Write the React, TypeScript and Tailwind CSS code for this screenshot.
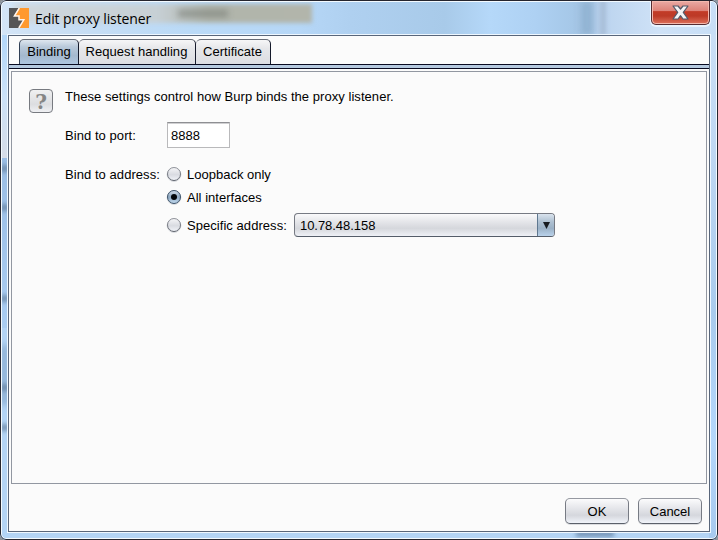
import React from "react";

const ui = "font-['Liberation_Sans',Arial,sans-serif] text-[13px] leading-[16px] text-black whitespace-nowrap";

function Radio({ checked = false }: { checked?: boolean }) {
  return (
    <svg width="16" height="16" viewBox="0 0 16 16" className="shrink-0">
      <defs>
        <linearGradient id="radioOff" x1="0" y1="0" x2="0" y2="1">
          <stop offset="0" stopColor="#f6f6f8" />
          <stop offset=".55" stopColor="#d9dbe1" />
          <stop offset="1" stopColor="#f2f4f9" />
        </linearGradient>
        <linearGradient id="radioOn" x1="0" y1="0" x2="0" y2="1">
          <stop offset="0" stopColor="#d3deea" />
          <stop offset=".5" stopColor="#8fa9c2" />
          <stop offset="1" stopColor="#c4dcf2" />
        </linearGradient>
        <linearGradient id="radioRim" x1="0" y1="0" x2="0" y2="1">
          <stop offset="0" stopColor="#92959c" />
          <stop offset="1" stopColor="#5d626c" />
        </linearGradient>
      </defs>
      <circle cx="8" cy="8.6" r="6.9" fill="none" stroke="#d8dade" />
      <circle cx="8" cy="8" r="6.5" fill={checked ? "url(#radioOn)" : "url(#radioOff)"} stroke={checked ? "#3c5269" : "url(#radioRim)"} />
      {checked && <circle cx="8" cy="8" r="3" fill="#020609" />}
    </svg>
  );
}

function Tab({ label, width, active = false }: { label: string; width: string; active?: boolean }) {
  const tone = active
    ? "bg-[linear-gradient(#dfe7ef_0%,#b9c9da_28%,#a4b9cf_65%,#afc6df_100%)] border-l-[#303f55]"
    : "bg-[linear-gradient(#f6f6f7_0%,#e6e7ea_35%,#dcdde2_100%)] border-l-0 pr-px";
  return (
    <div className={`${width} ${tone} ${ui} h-[25px] border border-b-0 border-t-[#666b76] border-r-[#151a2b] rounded-t-[5px] pt-[4px] text-center tracking-[0.04px]`}>
      {label}
    </div>
  );
}

function Button({ label }: { label: string }) {
  return (
    <button className={`${ui} h-[26px] w-[64px] rounded-[5px] border border-[#777b84] border-t-[#9699a1] border-b-[#5b606a] bg-[linear-gradient(#fbfbfc_0%,#e7e8ec_35%,#d5d7dd_68%,#f1f4fa_100%)] pt-[2px] shadow-[0_1px_0_#dcdde0]`}>
      {label}
    </button>
  );
}

function Glass() {
  return (
    <div className="absolute inset-0 overflow-hidden rounded-[6px]">
      <div className="absolute inset-0 bg-[#b3d4f5]" />
      <div className="absolute left-0 top-0 h-[36px] w-full bg-[linear-gradient(90deg,#d4e5f7_0px,#c9def3_60px,#badaf7_190px,#b6d7f7_300px,#afd0f0_350px,#a8cae9_445px,#b5d8f9_490px,#aed1f3_535px,#a5c7e7_575px,#bdd5ef_606px,#cfe2f7_660px,#c7def6_718px)]" />
      <div className="absolute left-[14px] top-[4px] h-[19px] w-[298px] bg-[linear-gradient(90deg,#d0d8de_0%,#c7d0d5_48%,#b1b5ac_65%,#b2b5ab_100%)] blur-[2px]" />
      <div className="absolute left-[178px] top-[10px] h-[7px] w-[50px] bg-[#747972] opacity-60 blur-[3px]" />
      <div className="absolute left-[580px] top-0 h-[36px] w-[14px] bg-[#8eb0d0] opacity-85 blur-[3px]" />
      <div className="absolute left-[600px] top-0 h-[36px] w-[6px] bg-[#a7bdd7] blur-[2px]" />
      <div className="absolute left-0 top-[35px] h-[123px] w-[9px] bg-[linear-gradient(#b3d7fa,#cce2f8_50%,#d6dce7)]" />
      <div className="absolute left-0 top-[158px] h-[170px] w-[9px] bg-[linear-gradient(#9abde4,#aacdf2)]" />
      <div className="absolute left-0 top-[345px] h-[60px] w-[9px] bg-[#91b3d6] blur-[3px]" />
      {[165, 204, 295, 384, 424].map((top) => (
        <div key={top} className="absolute left-0 h-[7px] w-[9px] bg-[#637f9e] opacity-70 blur-[2px]" style={{ top }} />
      ))}
      <div className="absolute right-0 top-[35px] h-[505px] w-[9px] bg-[linear-gradient(#cadff6,#bfd8f3_22%,#a9cbed_55%,#b4d7fb_80%,#a7c9ee_100%)]" />
      <div className="absolute left-[576px] top-[531px] h-[6px] w-[38px] bg-[#6687a9] opacity-80 blur-[2px]" />
      <div className="absolute inset-0 rounded-[6px] border border-[#25252e] shadow-[inset_0_0_0_1px_#f3faff]" />
    </div>
  );
}

function TitleBar() {
  return (
    <header className="flex h-[34px] items-start justify-between">
      <div className="flex pl-[9px]">
        <svg width="20" height="20" viewBox="0 0 20 20" className="mt-[8px]">
          <path d="M0 0H10L5 8H10V11.5H15L10 20H0Z" fill="#555557" />
          <path d="M10 0H20V20H10L15 11.5H10V8H5Z" fill="#ff992f" />
          <path d="M10.3 0L5.4 8H10V11.8H14.8L9.8 20" fill="none" stroke="#fff4ec" strokeWidth="1.5" />
        </svg>
        <h1 className="ml-[6px] mt-[9px] whitespace-nowrap font-['Open_Sans','Noto_Sans',sans-serif] text-[14px] leading-[20px] tracking-[-0.09px] text-black">
          Edit proxy listener
        </h1>
      </div>
      <button className="mr-[8px] mt-px flex h-[24px] w-[59px] items-center justify-center rounded-b-[5px] border border-t-0 border-[#562c32] bg-[linear-gradient(#eaaaa4_0%,#dd8278_43%,#c23b27_46%,#bd3a27_65%,#dd715c_100%)] shadow-[inset_0_0_0_1px_#f4b9ae,0_1px_0_1px_#e9f4ff]">
        <svg width="17" height="15" viewBox="0 0 17 15">
          <path d="M1 1H6L8.5 4L11 1H16L11.3 7.3L16 14H11L8.5 10.7L6 14H1L5.7 7.3Z" fill="#f4f4f5" stroke="#535969" strokeWidth="1.2" strokeLinejoin="round" />
        </svg>
      </button>
    </header>
  );
}

export default function App() {
  return (
    <div className="relative h-[540px] w-[718px] overflow-hidden bg-[#8e9297]">
      <Glass />
      <div className="relative flex h-full flex-col">
        <TitleBar />
        <main className="ml-[7px] flex h-[499px] w-[704px] flex-col border border-[#eef7ff]">
          <div className="flex min-h-0 flex-1 flex-col border border-[#59667a] bg-[#fbfbfb]">
            <nav className="mt-[3px] flex h-[26px] items-end border-b border-[#080a20] pl-[10px]">
              <Tab label="Binding" width="w-[60px]" active />
              <Tab label="Request handling" width="w-[117px]" />
              <Tab label="Certificate" width="w-[75px]" />
            </nav>
            <div className="h-[4px] border-b border-[#080a20] bg-[#b5c9df]" />
            <section className="ml-[2px] mt-[2px] h-[413px] w-[696px] border border-[#9297a1] pl-[17px] pt-[17px]">
              <div className="flex gap-[12px]">
                <div className="flex h-[24px] w-[24px] items-center justify-center rounded-[4px] border border-[#777a80] bg-[linear-gradient(#f0f0f1,#dcdde0_65%,#eff0f3)] pt-px font-['DejaVu_Serif',serif] text-[20px] font-bold leading-[22px] text-[#858585]">
                  ?
                </div>
                <div>
                  <p className={`${ui} tracking-[0.05px]`}>These settings control how Burp binds the proxy listener.</p>
                  <div className="mt-[17px] flex h-[26px] items-center">
                    <label className={`${ui} w-[102px] pt-[2px] tracking-[0.06px]`}>Bind to port:</label>
                    <div className={`${ui} h-[26px] w-[63px] border border-[#b9b9bb] border-t-[#8e8f93] bg-white pl-[3px] pt-[5px] shadow-[inset_0_1px_0_#d0d0d2]`}>8888</div>
                  </div>
                  <div className="mt-[18px] flex">
                    <label className={`${ui} w-[101px] pt-px tracking-[0.06px]`}>Bind to address:</label>
                    <div className="flex flex-col">
                      <div className={`${ui} flex h-[16px] items-center gap-[5px]`}><Radio /><span className="pt-[2px]">Loopback only</span></div>
                      <div className={`${ui} mt-[7px] flex h-[16px] items-center gap-[5px]`}><Radio checked /><span className="pt-[2px] tracking-[0.03px]">All interfaces</span></div>
                      <div className={`${ui} mt-[8px] flex h-[24px] items-center`}>
                        <Radio />
                        <span className="ml-[5px] w-[107px] pt-[2px] tracking-[0.05px]">Specific address:</span>
                        <div className="flex h-[24px] w-[261px] overflow-hidden rounded-[4px] border border-[#767a83] border-b-[#555d69] bg-[linear-gradient(#fafafb_0%,#e5e6ea_35%,#d5d7dc_65%,#eff1f7_100%)]">
                          <span className="flex-1 pl-[5px] pt-[4px] tracking-[-0.05px]">10.78.48.158</span>
                          <span className="flex w-[17px] items-center justify-center border-l border-[#5f7890] bg-[linear-gradient(#d9e3ed_0%,#afc1d2_35%,#9bb1c6_65%,#b9d2eb_100%)]">
                            <svg width="7" height="7" viewBox="0 0 7 7"><path d="M0 0H7L3.5 7Z" fill="#171b20" /></svg>
                          </span>
                        </div>
                      </div>
                    </div>
                  </div>
                </div>
              </div>
            </section>
            <footer className="mt-[14px] flex justify-end gap-[9px] pr-[7px]">
              <Button label="OK" />
              <Button label="Cancel" />
            </footer>
          </div>
        </main>
      </div>
    </div>
  );
}
